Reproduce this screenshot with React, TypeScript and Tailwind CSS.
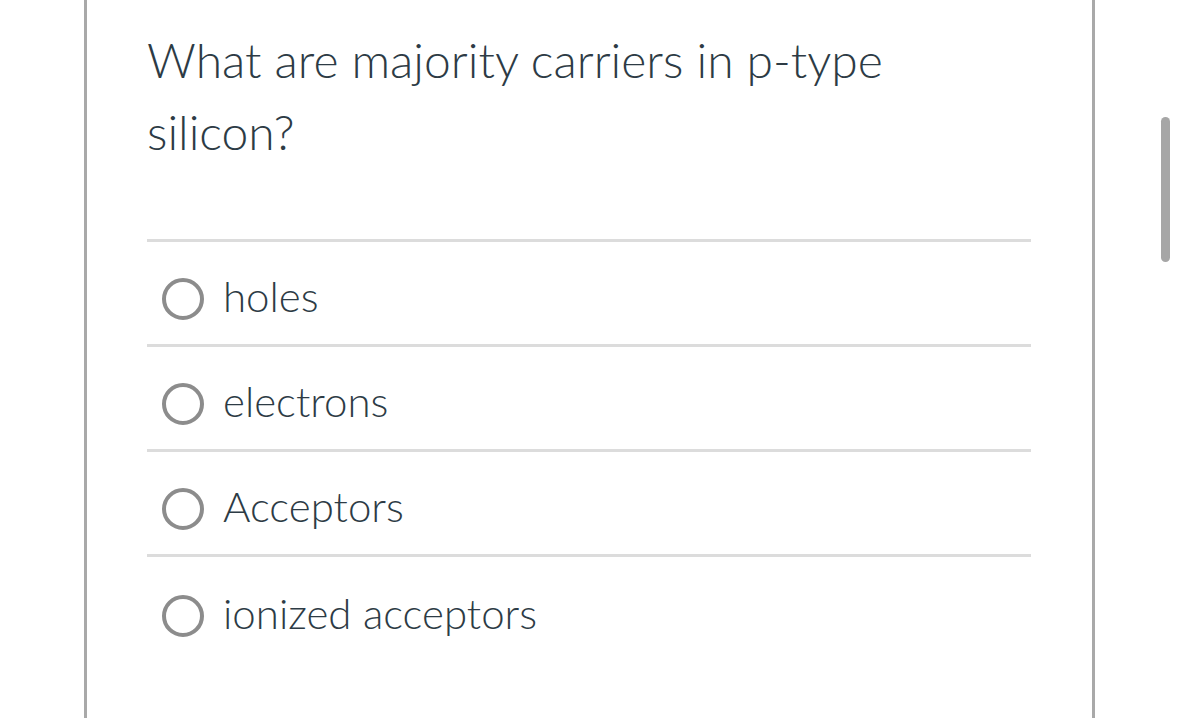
const options = ["holes", "electrons", "Acceptors", "ionized acceptors"];

export default function App() {
  return (
    <div
      className="w-[1179px] h-[718px] overflow-hidden bg-white flex"
      style={{ fontFamily: "Lato, 'Noto Sans', sans-serif" }}
    >
      <div className="ml-[84px] w-[1011px] h-[718px] border-x-[3px] border-[#a9a9a9] pl-[60px] pr-[61px] pt-[24px]">
        <p className="text-[48px] leading-[72px] font-light text-[#2d3b45]">
          What are majority carriers in p-type silicon?
        </p>
        <div className="mt-[71px] border-t-[3px] border-[#dcdcdc]">
          {options.map((o, i) => (
            <label
              key={o}
              className={
                "flex items-center h-[105px] pl-[15px] pt-[12px] " +
                (i < options.length - 1 ? "border-b-[3px] border-[#dcdcdc]" : "")
              }
            >
              <span className="w-[42px] h-[42px] rounded-full border-[4px] border-[#8c8c8c] shrink-0" />
              <span className="ml-[19px] -mt-[6px] text-[42px] font-light text-[#2d3b45] leading-none">
                {o}
              </span>
            </label>
          ))}
        </div>
      </div>
      <div className="ml-[66px] mt-[117px] w-[9px] h-[145px] rounded-full bg-[#a6a6a6]" />
    </div>
  );
}
